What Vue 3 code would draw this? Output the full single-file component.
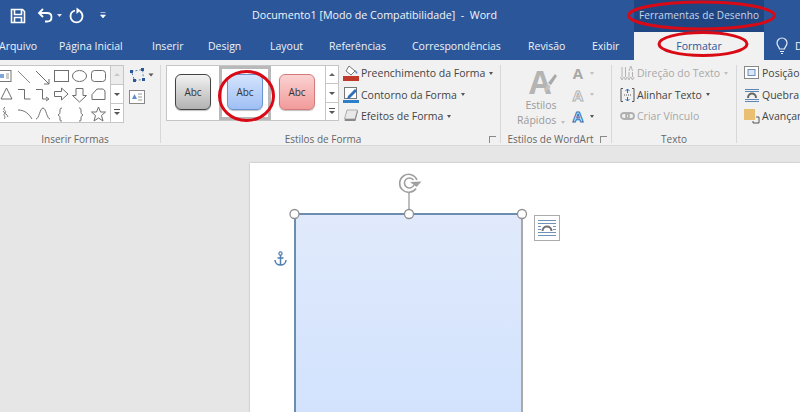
<script setup>
const tabs = ["Arquivo", "Página Inicial", "Inserir", "Design", "Layout", "Referências", "Correspondências", "Revisão", "Exibir"];
const styles = [
  { name: "dark", selected: false },
  { name: "blue", selected: true },
  { name: "red", selected: false },
];
</script>

<template>
  <div class="app">
    <header class="titlebar">
      <div class="qat">
        <svg class="qat-icons" width="110" height="32" viewBox="0 0 110 32">
          <path d="M11.5 9.5h11l2 2v11h-13z M14.5 9.5v5h7v-5 M14.5 22.5v-5h7v5" fill="none" stroke="#fff" stroke-width="1.6" />
          <path d="M43 9l-4 4 4 4 M39.5 13h7.5c3 0 4.500 2 4.500 4.200s-1.500 4.300-4.500 4.300h-2" fill="none" stroke="#fff" stroke-width="1.800" />
          <path d="M57 14h5l-2.500 3z" fill="#dfe7f3" />
          <path d="M75 10.500c-2.700.7-4.500 3-4.500 5.800 0 3.300 2.700 6 6 6s6-2.700 6-6c0-2.200-1.100-4.100-2.800-5.200" fill="none" stroke="#fff" stroke-width="1.800" />
          <path d="M76.500 7.500v6.500l4-3.500z" fill="#fff" />
          <path d="M100.500 12.500h5 M100.500 15h5l-2.500 3z" fill="#fff" stroke="#fff" stroke-width=".6" />
        </svg>
      </div>
      <div class="doc-title">Documento1 [Modo de Compatibilidade]&nbsp; -&nbsp; Word</div>
      <div class="context">Ferramentas de Desenho</div>
    </header>

    <nav class="tabs">
      <span v-for="tab in tabs" :key="tab" class="tab">{{ tab }}</span>
      <span class="tab-active">Formatar</span>
      <span class="tell">
        <svg width="14" height="18" viewBox="0 0 14 18">
          <path d="M4.500 12c0-2-2.500-3-2.500-6a5 5 0 0 1 10 0c0 3-2.500 4-2.500 6z M5 14.500h4 M6 16.500h2" fill="none" stroke="#e4ebf5" stroke-width="1.200" />
        </svg>
        D
      </span>
    </nav>

    <section class="ribbon">
      <div class="group g-insert">
        <div class="group-body">
          <div class="gallery shapes">
            <svg width="110" height="57" viewBox="0 0 110 57" fill="none" stroke="#6d6d6d" stroke-width="1">
              <rect x="-3" y="4.500" width="14" height="11" stroke="#777" />
              <path d="M0 8h4v4h-4z" fill="#7ea6d8" stroke="none" />
              <path d="M6 8h3 M6 10h3 M6 12h3" stroke="#999" />
              <path d="M18 5l12 12" stroke="#888" />
              <path d="M36 5l13 13 M49 13v5h-5" />
              <rect x="54.500" y="4.500" width="14" height="11" />
              <ellipse cx="79.500" cy="10" rx="7" ry="5.500" />
              <rect x="91.500" y="4.500" width="14" height="11" rx="3" />
              <path d="M1 33l5.500-11 5.500 11z" />
              <path d="M18 23.500h6.500v9.500h6" />
              <path d="M36 23.500h6.500v9.500h5 M46 31l3 2-3 2" />
              <path d="M54.500 25.500h7v-3.500l6.500 6-6.500 6v-3.500h-7z" />
              <path d="M76 22.500h7v7h3.500l-7 6.500-7-6.500h3.500z" />
              <path d="M97 23h5c2 0 3 1.500 3 3v7.500h-13v-5z" />
              <path d="M5 41c-4 3 3 4 0 6s2 4 -1 6 M3 45c2 3 4 3 5 6" stroke="#777" />
              <path d="M18 44c7 0 11 4 14 9" />
              <path d="M36 53c3 0 4-11 7-11s4 11 7 11" />
              <path d="M62 42c-2 0-2 1-2 3s0 3-2 4c2 1 2 2 2 4s0 2 2 2" />
              <path d="M79 42c2 0 2 1 2 3s0 3 2 4c-2 1-2 2-2 4s0 2-2 2" />
              <path d="M98.500 41l2 5h5l-4 3.500 1.500 5.500-4.500-3-4.500 3 1.500-5.500-4-3.500h5z" />
            </svg>
          </div>
          <div class="scroller">
            <span class="up off"></span>
            <span class="down"></span>
            <span class="more"></span>
          </div>
          <div class="insert-side">
            <svg width="26" height="16" viewBox="0 0 26 16" fill="none">
              <path d="M2.500 4.500l11-2 1 10-9 1z" stroke="#5d7fa9" stroke-dasharray="2 2" />
              <path d="M1 3h3v3h-3z M12 1h3v3h-3z M13 11h3v3h-3z M4 12h3v3h-3z" fill="#2b579a" />
              <path d="M19.500 6.500h5l-2.500 3z" fill="#555" />
            </svg>
            <svg width="16" height="14" viewBox="0 0 16 14" fill="none">
              <rect x=".5" y=".5" width="15" height="13" fill="#fff" stroke="#888" />
              <path d="M3 9l2.500-5 2.500 5z" fill="#5b8fd0" />
              <path d="M9 4h4 M9 7h4 M9 10h4" stroke="#999" />
            </svg>
          </div>
        </div>
        <div class="label">Inserir Formas</div>
      </div>

      <div class="group g-styles">
        <div class="group-body">
          <div class="gallery swatches">
            <div v-for="s in styles" :key="s.name" class="swatch" :class="{ selected: s.selected }">
              <span class="abc" :class="s.name">Abc</span>
            </div>
          </div>
          <div class="scroller">
            <span class="up"></span>
            <span class="down"></span>
            <span class="more"></span>
          </div>
          <ul class="commands">
            <li>
              <svg width="16" height="16" viewBox="0 0 16 16">
                <path d="M6 1l6 5-4 4-5-4z" fill="#fff" stroke="#777" />
                <path d="M12 5c2 1 3 3 2 4-1.500-1-2-2-2-4z" fill="#5b8fd0" />
                <rect x="0" y="11" width="16" height="5" fill="#c0392b" />
              </svg>
              Preenchimento da Forma <i class="caret"></i>
            </li>
            <li>
              <svg width="16" height="16" viewBox="0 0 16 16" fill="none">
                <rect x="1.500" y=".5" width="12" height="11" stroke="#777" fill="#fff" />
                <path d="M5 9l7-7 2 2-7 7-3 1z" fill="#2f6fb8" />
                <rect x="0" y="13" width="16" height="3" fill="#2f7fc8" />
              </svg>
              Contorno da Forma <i class="caret"></i>
            </li>
            <li>
              <svg width="16" height="16" viewBox="0 0 16 16">
                <path d="M4 3h11l-2.500 10h-11z" fill="#8a8a8a" />
                <path d="M4 2h10.500l-2.500 9h-10.500z" fill="#e9e9e9" stroke="#888" stroke-width=".6" />
              </svg>
              Efeitos de Forma <i class="caret"></i>
            </li>
          </ul>
        </div>
        <div class="label">Estilos de Forma<i class="launcher"></i></div>
      </div>

      <div class="group g-wordart">
        <div class="group-body">
          <div class="quick">
            <div class="big-a">
              <span>A</span>
              <svg width="15" height="24" viewBox="0 0 15 24">
                <path d="M13 3l2 2-6 9-3-2z" fill="#a9a9a9" />
                <path d="M5.500 13l3 2c-.5 3-3 5-6.500 5 2-2 1.500-5 3.500-7z" fill="#c2c2c2" />
              </svg>
            </div>
            <span>Estilos</span>
            <span>Rápidos <i class="caret pale"></i></span>
          </div>
          <div class="a-column">
            <div class="a-row"><span class="a solid">A</span><i class="caret pale"></i></div>
            <div class="a-row"><span class="a outline">A</span><i class="caret pale"></i></div>
            <div class="a-row"><span class="a glow">A</span><i class="caret"></i></div>
          </div>
        </div>
        <div class="label">Estilos de WordArt<i class="launcher"></i></div>
      </div>

      <div class="group g-text">
        <div class="group-body">
          <ul class="commands">
            <li class="disabled">
              <svg width="15" height="16" viewBox="0 0 15 16" fill="none" stroke="#b4b4b4">
                <path d="M2 2v10 M5.500 2v10 M9 7v5 M12.500 7v5" />
                <path d="M0.500 12l1.500 3 1.500-3 M4 12l1.500 3 1.500-3 M7.500 12l1.500 3 1.500-3 M11 12l1.500 3 1.500-3" />
                <path d="M9 6l1.800-5 1.800 5" />
              </svg>
              Direção do Texto <i class="caret pale"></i>
            </li>
            <li>
              <svg width="15" height="16" viewBox="0 0 15 16" fill="none" stroke="#555">
                <path d="M3 1.500h-2v13h2 M12 1.500h2v13h-2" />
                <path d="M4 8h7" stroke-dasharray="1 1" />
                <path d="M7.500 2v4 M5.500 4l2-2 2 2 M7.500 10v4 M5.500 12l2 2 2-2" stroke="#2f6fb8" />
              </svg>
              Alinhar Texto <i class="caret"></i>
            </li>
            <li class="disabled">
              <svg width="15" height="16" viewBox="0 0 15 16" fill="none" stroke="#b0b0b0" stroke-width="1.800">
                <rect x="1" y="5" width="8" height="6" rx="3" />
                <rect x="6" y="5" width="8" height="6" rx="3" />
              </svg>
              Criar Vínculo
            </li>
          </ul>
        </div>
        <div class="label pad-text">Texto</div>
      </div>

      <div class="group g-arrange">
        <div class="group-body">
          <ul class="commands">
            <li>
              <svg width="16" height="16" viewBox="0 0 16 16" fill="none">
                <rect x=".5" y="1.500" width="14" height="12" fill="#fff" stroke="#888" />
                <rect x="4" y="4.500" width="7" height="6" fill="#dbe7f6" stroke="#6d8fb8" />
              </svg>
              Posição
            </li>
            <li>
              <svg width="16" height="16" viewBox="0 0 16 16" fill="none">
                <path d="M1 2.500h14 M1 4.500h14 M1 12.500h14 M1 14.500h14" stroke="#5d85b5" />
                <path d="M4 11c0-6 8-6 8 0" stroke="#666" stroke-width="2" />
              </svg>
              Quebra
            </li>
            <li>
              <svg width="16" height="16" viewBox="0 0 16 16" fill="none">
                <rect x="0" y="1" width="11" height="11" fill="#e9bf72" />
                <path d="M12 9h3v6h-6v-2" stroke="#555" />
              </svg>
              Avançar
            </li>
          </ul>
        </div>
      </div>
    </section>

    <main class="canvas">
      <div class="page">
        <div class="shape"></div>
        <svg class="handles" width="300" height="250" viewBox="0 0 300 250" fill="none">
          <path d="M159 51v-22" stroke="#a8a8a8" stroke-width="1.500" />
          <path d="M167 17a9 9 0 1 0-1 8.500 M163.500 17a5 5 0 1 0 .5 5" stroke="#a0a0a0" stroke-width="1.600" />
          <path d="M160 19l11.500-.5-5 5.500z" fill="#a0a0a0" />
          <circle cx="44.500" cy="51" r="4.500" fill="#fff" stroke="#909090" stroke-width="1.300" />
          <circle cx="159" cy="51" r="4.500" fill="#fff" stroke="#909090" stroke-width="1.300" />
          <circle cx="272" cy="51" r="4.500" fill="#fff" stroke="#909090" stroke-width="1.300" />
          <circle cx="30.500" cy="90.500" r="1.600" stroke="#4f7fb0" stroke-width="1.200" />
          <path d="M30.500 92v10 M27.500 95h6 M25 97c0 3 2.500 5 5.500 5s5.500-2 5.500-5" stroke="#4f7fb0" stroke-width="1.500" />
        </svg>
        <button class="layout-btn" aria-label="Opções de layout">
          <svg width="20" height="20" viewBox="0 0 20 20" fill="none">
            <path d="M1 2.500h18 M1 5.500h18 M1 14.500h18 M1 17.500h18" stroke="#6f92ba" />
            <path d="M1 8.500h3 M16 8.500h3 M1 11.500h3 M16 11.500h3" stroke="#6f92ba" />
            <path d="M5.500 13c0-6 9-6 9 0" stroke="#707070" stroke-width="2" />
          </svg>
        </button>
      </div>
    </main>

    <svg class="marks" width="800" height="412" viewBox="0 0 800 412" fill="none" stroke="#d90a16" stroke-width="3">
      <ellipse cx="701.500" cy="15.500" rx="73" ry="13.500" />
      <ellipse cx="703" cy="44" rx="44" ry="11.500" />
      <ellipse cx="246.500" cy="96" rx="27" ry="24.500" />
    </svg>
  </div>
</template>

<style scoped>
.app {
  position: relative;
  width: 800px;
  height: 412px;
  overflow: hidden;
  font-family: "Open Sans", "Noto Sans", sans-serif;
  font-size: 10.5px;
  color: #444;
  background: #e6e6e6;
}

.titlebar {
  display: flex;
  height: 32px;
  background: #2b579a;
  color: #fff;
}
.qat {
  width: 252px;
}
.qat-icons {
  display: block;
}
.doc-title {
  width: 382px;
  line-height: 30px;
  font-size: 10.7px;
  color: #f2f5fa;
  white-space: nowrap;
}
.context {
  width: 130px;
  background: #1f4682;
  color: #c9d6ea;
  text-align: center;
  line-height: 30px;
  white-space: nowrap;
  letter-spacing: 0.1px;
  font-size: 10px;
}

.tabs {
  display: grid;
  grid-template-columns: 60px 93px 56px 62px 59px 83px 116px 64px 42px 130px 1fr;
  align-items: center;
  height: 28px;
  background: #2b579a;
  color: #eef2f8;
  margin-left: -1px;
}
.tab {
  white-space: nowrap;
}
.tab-active {
  height: 28px;
  line-height: 28px;
  text-align: center;
  background: #f1f1f1;
  color: #2b579a;
}
.tell {
  display: flex;
  align-items: center;
  gap: 6px;
  padding-left: 11px;
}

.ribbon {
  display: flex;
  height: 86px;
  padding-top: 5px;
  box-sizing: border-box;
  background: #f1f1f1;
  border-bottom: 1px solid #d8d8d8;
}
.group {
  display: flex;
  flex-direction: column;
  box-sizing: border-box;
  height: 78px;
  border-right: 1px solid #d8d8d8;
}
.group-body {
  display: flex;
  flex: none;
  height: 66px;
}
.label {
  position: relative;
  flex: none;
  text-align: center;
  line-height: 16px;
  font-size: 10px;
  color: #666;
  white-space: nowrap;
}
.g-insert {
  width: 161px;
}
.g-insert .label {
  padding-right: 10px;
}
.g-styles {
  width: 340px;
  padding-left: 5px;
}
.g-styles .label {
  padding-right: 20px;
}
.g-wordart {
  width: 111px;
}
.g-wordart .label {
  padding-right: 11px;
}
.g-text {
  width: 125px;
  padding-left: 4px;
}
.pad-text {
  padding-right: 4px;
}
.g-arrange {
  flex: 1;
  border-right: none;
  padding-left: 3px;
  overflow: hidden;
}

.gallery {
  box-sizing: border-box;
  height: 56px;
  background: #fff;
  border: 1px solid #c6c6c6;
  border-right: none;
}
.shapes {
  width: 110px;
  height: 58px;
  border-left: none;
}
.shapes svg {
  display: block;
}
.swatches {
  display: flex;
  width: 159px;
}
.swatch {
  box-sizing: border-box;
  width: 52px;
  height: 54px;
  display: flex;
  align-items: center;
  justify-content: center;
  padding-bottom: 2px;
}
.swatch.selected {
  border: 3px solid #b9b9b9;
}
.abc {
  box-sizing: border-box;
  flex: none;
  width: 36px;
  height: 36px;
  border-radius: 6px;
  border: 1.500px solid #444;
  display: flex;
  align-items: center;
  justify-content: center;
  color: #333;
  font-size: 10px;
  box-shadow: 0 1px 1px rgba(0, 0, 0, 0.25);
}
.abc.dark {
  background: linear-gradient(#f2f2f2, #b2b2b2);
}
.abc.blue {
  border-color: #6a93cf;
  background: linear-gradient(#d4e3fc, #9fc0f5);
}
.abc.red {
  border-color: #d37a7a;
  background: linear-gradient(#fbd2d2, #f29b9b);
}

.scroller {
  display: flex;
  flex-direction: column;
  box-sizing: border-box;
  width: 14px;
  height: 56px;
  background: #fff;
  border: 1px solid #c6c6c6;
}
.shapes + .scroller {
  height: 58px;
}
.scroller span {
  position: relative;
  flex: 1;
  border-bottom: 1px solid #c6c6c6;
}
.scroller span:last-child {
  border-bottom: none;
}
.scroller .off {
  background: #ececec;
}
.scroller .up::after,
.scroller .down::after,
.scroller .more::after {
  content: "";
  position: absolute;
  left: 3px;
  top: 7px;
  border: 3px solid transparent;
}
.scroller .up::after {
  top: 4px;
  border-bottom-color: #666;
}
.scroller .up.off::after {
  border-bottom-color: #c8c8c8;
}
.scroller .down::after {
  top: 8px;
  border-top-color: #555;
}
.scroller .more::after {
  top: 8px;
  border-top-color: #555;
}
.scroller .more::before {
  content: "";
  position: absolute;
  left: 3px;
  top: 5px;
  width: 6px;
  height: 1px;
  background: #555;
}

.insert-side {
  display: flex;
  flex-direction: column;
  align-items: flex-start;
  gap: 7px;
  margin: 2px 0 0 5px;
}

.commands {
  list-style: none;
  margin: 0;
  padding: 0 0 0 4px;
  display: flex;
  flex-direction: column;
  gap: 5.500px;
  white-space: nowrap;
  font-size: 10.5px;
  color: #444;
}
.commands li {
  display: flex;
  align-items: center;
  gap: 2px;
  height: 16px;
}
.commands .disabled {
  color: #a8a8a8;
}
.caret {
  display: inline-block;
  width: 0;
  height: 0;
  margin-left: 2px;
  border: 2.500px solid transparent;
  border-top: 3px solid #555;
  border-bottom: none;
}
.caret.pale {
  border-top-color: #c0c0c0;
}
.launcher {
  position: absolute;
  right: 4px;
  top: 5px;
  width: 7px;
  height: 7px;
  box-sizing: border-box;
  border-left: 1px solid #8a8a8a;
  border-top: 1px solid #8a8a8a;
}

.quick {
  display: flex;
  flex: none;
  flex-direction: column;
  align-items: center;
  width: 60px;
  margin-left: 10px;
  color: #9a9a9a;
  line-height: 15px;
  font-size: 10.5px;
  white-space: nowrap;
}
.big-a {
  display: flex;
  height: 33px;
  font-size: 32px;
  line-height: 33px;
  font-weight: 700;
  color: #b4b4b4;
}
.big-a svg {
  margin: 6px -4px 0 -9px;
}
.a-column {
  display: flex;
  flex-direction: column;
  gap: 1.500px;
  margin-top: -2px;
}
.a-row {
  display: flex;
  align-items: center;
  height: 20px;
  gap: 3px;
}
.a {
  width: 14px;
  text-align: center;
  font-size: 15px;
  font-weight: 700;
  line-height: 20px;
}
.a.solid {
  color: #a8a8a8;
}
.a.outline {
  color: #f1f1f1;
  -webkit-text-stroke: 1px #b4b4b4;
}
.a.glow {
  color: #dbe8f8;
  -webkit-text-stroke: 1px #2f6fb8;
}

.canvas {
  display: flex;
  padding: 17px 0 0 250px;
  height: 266px;
  box-sizing: border-box;
}
.page {
  position: relative;
  flex: 1;
  background: #fff;
  box-shadow: 0 0 2px rgba(0, 0, 0, 0.25);
}
.shape {
  position: absolute;
  left: 44px;
  top: 50px;
  width: 229px;
  height: 230px;
  box-sizing: border-box;
  border-top: 2px solid #6c8db0;
  border-left: 2px solid #6c8db0;
  border-right: 2px solid #a9a9a9;
  background: linear-gradient(#e0eafb, #d0e1fe);
}
.handles {
  position: absolute;
  left: 0;
  top: 0;
}
.layout-btn {
  position: absolute;
  left: 284px;
  top: 52px;
  width: 26px;
  height: 26px;
  padding: 0;
  display: flex;
  align-items: center;
  justify-content: center;
  background: #fff;
  border: 1px solid #ababab;
}

.marks {
  position: absolute;
  left: 0;
  top: 0;
  pointer-events: none;
}
</style>
